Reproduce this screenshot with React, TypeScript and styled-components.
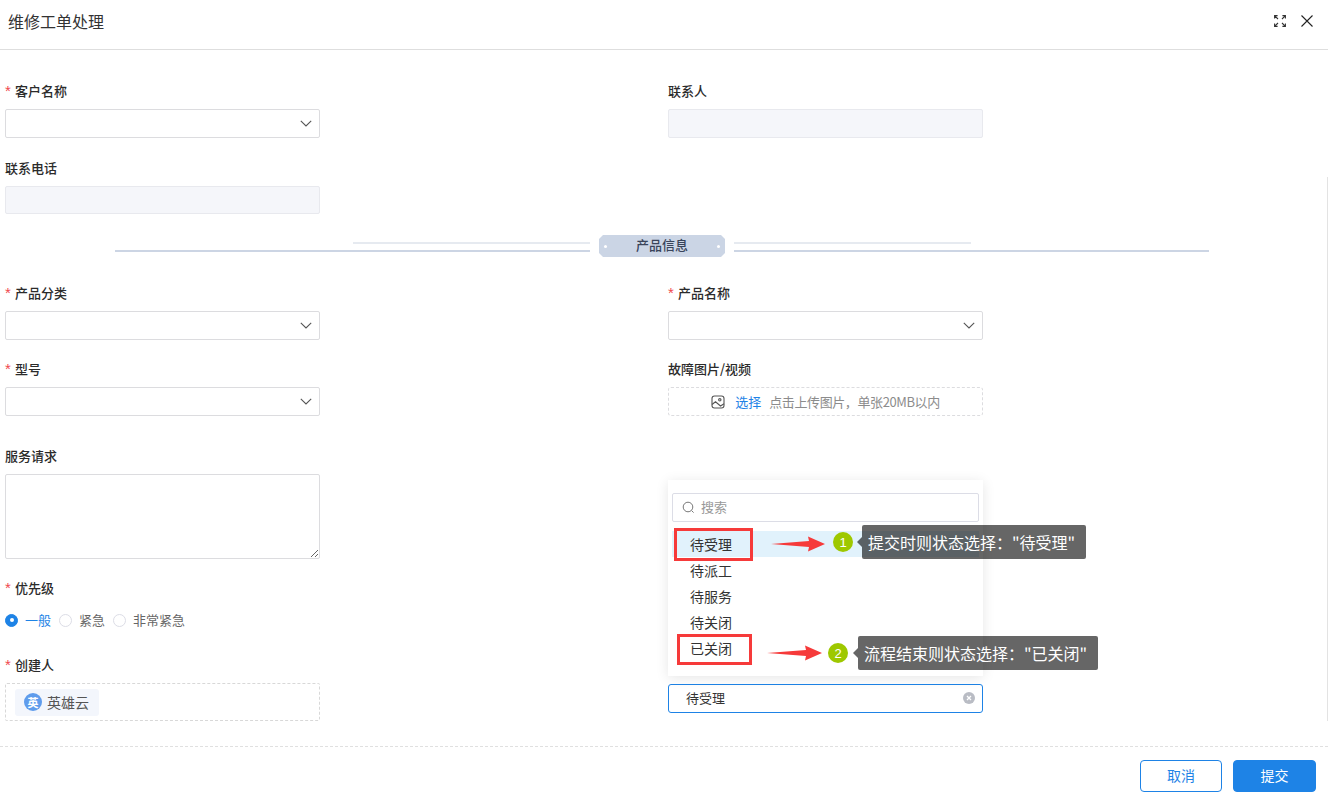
import React from 'react';
import styled, { createGlobalStyle } from 'styled-components';

const GlobalStyle = createGlobalStyle`
  html, body {
    margin: 0;
    padding: 0;
    background: #fff;
    font-family: "Noto Sans CJK SC", "Liberation Sans", sans-serif;
    color: #333;
  }
  * { box-sizing: border-box; }
`;

const Page = styled.div`
  position: relative;
  width: 1328px;
  height: 800px;
  overflow: hidden;
`;

const ScrollTrack = styled.div`
  position: absolute;
  right: 0;
  top: 177px;
  width: 1px;
  height: 544px;
  background: #e3e3e3;
`;

const Header = styled.header`
  display: flex;
  align-items: center;
  justify-content: space-between;
  height: 50px;
  padding: 0 15px 7px 8px;
  border-bottom: 1px solid #dedede;
`;

const Title = styled.h1`
  margin: 0;
  font-size: 16px;
  font-weight: 400;
  line-height: 22px;
  color: #333;
`;

const HeaderActions = styled.div`
  display: flex;
  align-items: center;
  gap: 15px;
`;

const Body = styled.main`
  padding: 32px 9px 0 5px;
`;

const Row = styled.div<{ $top?: number }>`
  display: grid;
  grid-template-columns: 315px 315px;
  column-gap: 348px;
  margin-top: ${(p) => p.$top ?? 0}px;
`;

const Field = styled.div<{ $offset?: number }>`
  position: relative;
  display: flex;
  flex-direction: column;
  gap: 9px;
  padding-top: ${(p) => p.$offset ?? 0}px;
`;

const Label = styled.label<{ $required?: boolean }>`
  display: block;
  height: 18px;
  font-size: 13px;
  line-height: 18px;
  font-weight: 500;
  color: #2b2b2b;
  ${(p) =>
    p.$required &&
    `
    &::before {
      content: '*';
      display: inline-block;
      width: 10px;
      color: #f0484c;
      font-family: "Liberation Sans", sans-serif;
      font-size: 15px;
      font-weight: 400;
      line-height: 18px;
      vertical-align: top;
    }
  `}
`;

const SelectBox = styled.div<{ $active?: boolean }>`
  display: flex;
  align-items: center;
  justify-content: space-between;
  height: 29px;
  padding: 0 7px ${(p) => (p.$active ? 2 : 0)}px 17px;
  background: #fff;
  border: 1px solid ${(p) => (p.$active ? '#1e83e6' : '#dcdcdf')};
  border-radius: ${(p) => (p.$active ? 3 : 2)}px;
  font-size: 13px;
  color: #333;
`;

const DisabledInput = styled.div<{ $height: number }>`
  height: ${(p) => p.$height}px;
  background: #f5f6fa;
  border: 1px solid #e8e9ee;
  border-radius: 2px;
`;

const Divider = styled.div`
  display: flex;
  justify-content: center;
  align-items: center;
  gap: 9px;
  height: 22px;
  margin-top: 21px;
`;

const DividerLines = styled.div<{ $flip?: boolean }>`
  display: flex;
  flex-direction: column;
  align-items: ${(p) => (p.$flip ? 'flex-start' : 'flex-end')};
  gap: 6px;
  width: 475px;
  margin-top: 2px;
`;

const LineShort = styled.div`
  width: 237px;
  height: 2px;
  background: #e6eaf0;
`;

const LineLong = styled.div`
  width: 100%;
  height: 2px;
  background: #ccd5e4;
`;

const DividerBadge = styled.div`
  position: relative;
  width: 126px;
  height: 22px;
  background: #cbd5e5;
  clip-path: polygon(4px 0, calc(100% - 4px) 0, 100% 4px, 100% calc(100% - 4px), calc(100% - 4px) 100%, 4px 100%, 0 calc(100% - 4px), 0 4px);
  font-size: 13px;
  font-weight: 500;
  line-height: 20px;
  text-align: center;
  color: #39445a;
  &::before,
  &::after {
    content: '';
    position: absolute;
    top: 10px;
    width: 3px;
    height: 3px;
    border-radius: 50%;
    background: #fff;
  }
  &::before { left: 5px; }
  &::after { right: 5px; }
`;

const UploadBox = styled.div`
  display: flex;
  align-items: center;
  justify-content: center;
  gap: 8px;
  height: 29px;
  border: 1px dashed #dcdcdf;
  border-radius: 3px;
  font-size: 13px;
  color: #8c8c8c;
`;

const UploadLink = styled.span`
  margin-left: 2px;
  color: #1e83e6;
`;

const UploadHint = styled.span`
  letter-spacing: -0.4px;
`;

const TextArea = styled.textarea`
  display: block;
  width: 315px;
  height: 85px;
  padding: 6px;
  resize: both;
  outline: none;
  border: 1px solid #dcdcdf;
  border-radius: 2px;
`;

const RadioGroup = styled.div`
  display: flex;
  align-items: center;
  height: 16px;
  margin-top: 6px;
`;

const RadioItem = styled.div<{ $checked?: boolean }>`
  display: flex;
  align-items: center;
  gap: 7px;
  margin-right: 8px;
  font-size: 13px;
  line-height: 16px;
  color: ${(p) => (p.$checked ? '#1e83e6' : '#666')};
`;

const RadioDot = styled.span<{ $checked?: boolean }>`
  display: flex;
  align-items: center;
  justify-content: center;
  width: 13px;
  height: 13px;
  border-radius: 50%;
  border: 1px solid ${(p) => (p.$checked ? '#1e83e6' : '#dcdde6')};
  background: ${(p) => (p.$checked ? '#1e83e6' : '#fff')};
  &::after {
    content: '';
    display: ${(p) => (p.$checked ? 'block' : 'none')};
    width: 4px;
    height: 4px;
    border-radius: 50%;
    background: #fff;
  }
`;

const MemberBox = styled.div`
  display: flex;
  align-items: center;
  height: 38px;
  padding-left: 9px;
  border: 1px dashed #d8d8d8;
  border-radius: 2px;
`;

const MemberChip = styled.div`
  display: flex;
  align-items: center;
  gap: 5px;
  width: 84px;
  height: 27px;
  padding-left: 9px;
  background: #f3f6fc;
  border-radius: 3px;
  font-size: 14px;
  color: #555;
`;

const Avatar = styled.span`
  display: flex;
  align-items: center;
  justify-content: center;
  width: 18px;
  height: 18px;
  border-radius: 50%;
  background: #5f9cec;
  color: #fff;
  font-size: 11px;
  font-weight: 700;
`;

const Dropdown = styled.div`
  position: absolute;
  left: 0;
  top: -176px;
  width: 315px;
  height: 196px;
  padding: 13px 4px 15px;
  background: #fff;
  box-shadow: 0 2px 12px rgba(0, 0, 0, 0.1);
`;

const SearchBox = styled.div`
  display: flex;
  align-items: center;
  gap: 6px;
  height: 29px;
  padding: 0 0 3px 9px;
  border: 1px solid #dcdde6;
  border-radius: 2px;
  font-size: 13px;
  color: #999;
  svg {
    margin-top: 3px;
  }
`;

const OptionList = styled.ul`
  margin: 9px 0 0;
  padding: 0;
  list-style: none;
`;

const OptionItem = styled.li<{ $active?: boolean }>`
  height: 26px;
  padding-left: 18px;
  font-size: 14px;
  line-height: 26px;
  color: #333;
  background: ${(p) => (p.$active ? '#e1f2fc' : 'transparent')};
`;

const RedBox = styled.div<{ $left: number; $top: number; $w: number; $h: number }>`
  position: absolute;
  left: ${(p) => p.$left}px;
  top: ${(p) => p.$top}px;
  width: ${(p) => p.$w}px;
  height: ${(p) => p.$h}px;
  border: 3px solid #f63a3a;
`;

const Annotation = styled.div<{ $left: number; $top: number }>`
  position: absolute;
  left: ${(p) => p.$left}px;
  top: ${(p) => p.$top}px;
  display: flex;
  align-items: center;
`;

const ArrowWrap = styled.svg<{ $drop: number }>`
  display: block;
  flex: none;
  margin-top: ${(p) => p.$drop}px;
`;

const StepBadge = styled.span<{ $gap: number }>`
  display: flex;
  align-items: center;
  justify-content: center;
  flex: none;
  width: 20px;
  height: 20px;
  margin-left: ${(p) => p.$gap}px;
  border-radius: 50%;
  background: #9ec800;
  color: #fff;
  font-family: "Liberation Sans", sans-serif;
  font-size: 13px;
`;

const Callout = styled.div<{ $gap: number }>`
  position: relative;
  height: 34px;
  margin-left: ${(p) => p.$gap}px;
  padding: 0 11px 0 6px;
  background: rgba(0, 0, 0, 0.6);
  border-radius: 2px;
  color: #fff;
  font-size: 16px;
  line-height: 34px;
  white-space: nowrap;
  &::before {
    content: '';
    position: absolute;
    left: -5px;
    top: 12px;
    border-style: solid;
    border-width: 5px 5px 5px 0;
    border-color: transparent rgba(0, 0, 0, 0.6) transparent transparent;
  }
`;

const Footer = styled.footer`
  display: flex;
  justify-content: flex-end;
  gap: 11px;
  margin-top: 25px;
  padding: 13px 12px 0 0;
  border-top: 1px dashed #e0e0e0;
`;

const Button = styled.button<{ $primary?: boolean }>`
  width: ${(p) => (p.$primary ? 83 : 82)}px;
  height: 32px;
  padding: 0 0 2px;
  border: 1px solid #1e83e6;
  border-radius: 4px;
  background: ${(p) => (p.$primary ? '#1e83e6' : '#fff')};
  color: ${(p) => (p.$primary ? '#fff' : '#1e83e6')};
  font-family: inherit;
  font-size: 14px;
`;

const Chevron = () => (
  <svg width="12" height="7" viewBox="0 0 12 7" fill="none" stroke="#555" strokeWidth="1.1">
    <path d="M0.8 0.8 L6 6 L11.2 0.8" />
  </svg>
);

const ExpandIcon = () => (
  <svg width="12" height="12" viewBox="0 0 12 12" fill="none" stroke="#333" strokeWidth="1.1">
    <path d="M0.6 3.6V0.6H3.6M0.8 0.8L4 4" />
    <path d="M8.4 0.6H11.4V3.6M11.2 0.8L8 4" />
    <path d="M0.6 8.4V11.4H3.6M0.8 11.2L4 8" />
    <path d="M8.4 11.4H11.4V8.4M11.2 11.2L8 8" />
  </svg>
);

const CloseIcon = () => (
  <svg width="12" height="12" viewBox="0 0 12 12" fill="none" stroke="#222" strokeWidth="1.1">
    <path d="M0.5 0.5L11.5 11.5M11.5 0.5L0.5 11.5" />
  </svg>
);

const SearchIcon = () => (
  <svg width="13" height="13" viewBox="0 0 13 13" fill="none" stroke="#777" strokeWidth="1">
    <circle cx="6" cy="6" r="4.8" />
    <path d="M9.6 9.6L11.6 11.6" />
  </svg>
);

const ImageIcon = () => (
  <svg width="14" height="14" viewBox="0 0 14 14" fill="none" stroke="#555" strokeWidth="1.1">
    <rect x="1" y="1" width="12" height="12" rx="2.5" />
    <circle cx="8.8" cy="4.8" r="1.2" />
    <path d="M1 9.5L4.5 6.8L9.5 11L13 8.8" />
  </svg>
);

const ClearIcon = () => (
  <svg width="12" height="12" viewBox="0 0 12 12">
    <circle cx="6" cy="6" r="6" fill="#b9bcc4" />
    <path d="M4 4L8 8M8 4L4 8" stroke="#fff" strokeWidth="1.3" />
  </svg>
);

const RedArrow = ({ width, head, drop }: { width: number; head: number; drop: number }) => (
  <ArrowWrap $drop={drop} width={width} height="16" viewBox={`0 0 ${width} 16`}>
    <path d={`M0 8 L${width - head + 1} 5 L${width - head} 0.5 L${width} 8 L${width - head} 15.5 L${width - head + 1} 11 Z`} fill="#f63a3a" />
  </ArrowWrap>
);

const PRIORITIES = ['一般', '紧急', '非常紧急'];
const STATUS_OPTIONS = ['待受理', '待派工', '待服务', '待关闭', '已关闭'];

export default function App() {
  return (
    <Page>
      <GlobalStyle />
      <Header>
        <Title>维修工单处理</Title>
        <HeaderActions>
          <ExpandIcon />
          <CloseIcon />
        </HeaderActions>
      </Header>

      <Body>
        <Row>
          <Field>
            <Label $required>客户名称</Label>
            <SelectBox><span /><Chevron /></SelectBox>
          </Field>
          <Field>
            <Label>联系人</Label>
            <DisabledInput $height={29} />
          </Field>
        </Row>
        <Row $top={21}>
          <Field>
            <Label>联系电话</Label>
            <DisabledInput $height={28} />
          </Field>
        </Row>

        <Divider>
          <DividerLines>
            <LineShort />
            <LineLong />
          </DividerLines>
          <DividerBadge>产品信息</DividerBadge>
          <DividerLines $flip>
            <LineShort />
            <LineLong />
          </DividerLines>
        </Divider>

        <Row $top={27}>
          <Field>
            <Label $required>产品分类</Label>
            <SelectBox><span /><Chevron /></SelectBox>
          </Field>
          <Field>
            <Label $required>产品名称</Label>
            <SelectBox><span /><Chevron /></SelectBox>
          </Field>
        </Row>
        <Row $top={20}>
          <Field>
            <Label $required>型号</Label>
            <SelectBox><span /><Chevron /></SelectBox>
          </Field>
          <Field>
            <Label>故障图片/视频</Label>
            <UploadBox>
              <ImageIcon />
              <UploadLink>选择</UploadLink>
              <UploadHint>点击上传图片，单张20MB以内</UploadHint>
            </UploadBox>
          </Field>
        </Row>
        <Row $top={31}>
          <Field>
            <Label>服务请求</Label>
            <TextArea />
          </Field>
        </Row>
        <Row $top={20}>
          <Field>
            <Label $required>优先级</Label>
            <RadioGroup>
              {PRIORITIES.map((item, i) => (
                <RadioItem key={item} $checked={i === 0}>
                  <RadioDot $checked={i === 0} />
                  {item}
                </RadioItem>
              ))}
            </RadioGroup>
          </Field>
        </Row>
        <Row $top={28}>
          <Field>
            <Label $required>创建人</Label>
            <MemberBox>
              <MemberChip>
                <Avatar>英</Avatar>
                英雄云
              </MemberChip>
            </MemberBox>
          </Field>
          <Field $offset={28}>
            <SelectBox $active>
              待受理
              <ClearIcon />
            </SelectBox>
            <Dropdown>
              <SearchBox>
                <SearchIcon />
                搜索
              </SearchBox>
              <OptionList>
                {STATUS_OPTIONS.map((item, i) => (
                  <OptionItem key={item} $active={i === 0}>{item}</OptionItem>
                ))}
              </OptionList>
              <RedBox $left={6} $top={48} $w={79} $h={33} />
              <RedBox $left={9} $top={154} $w={75} $h={31} />
              <Annotation $left={103} $top={45}>
                <RedArrow width={54} head={17} drop={4} />
                <StepBadge $gap={8}>1</StepBadge>
                <Callout $gap={9}>提交时则状态选择："待受理"</Callout>
              </Annotation>
              <Annotation $left={99} $top={156}>
                <RedArrow width={55} head={17} drop={0} />
                <StepBadge $gap={6}>2</StepBadge>
                <Callout $gap={10}>流程结束则状态选择："已关闭"</Callout>
              </Annotation>
            </Dropdown>
          </Field>
        </Row>
      </Body>

      <Footer>
        <Button>取消</Button>
        <Button $primary>提交</Button>
      </Footer>
      <ScrollTrack />
    </Page>
  );
}
